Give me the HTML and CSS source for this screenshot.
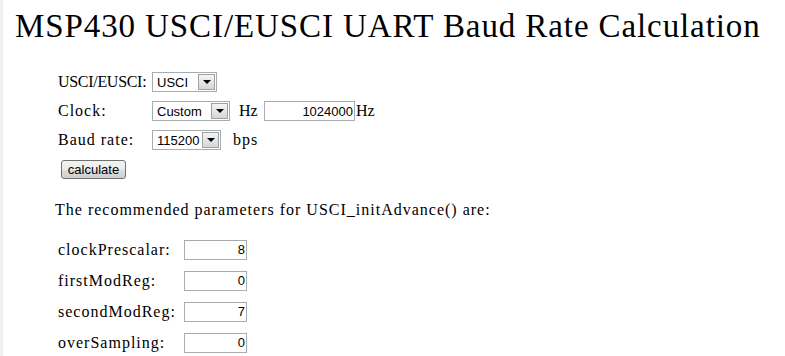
FILE: index.html
```html
<!doctype html>
<html lang="en">
  <head>
    <meta charset="UTF-8" />
    <title>MSP430 USCI/EUSCI UART Baud Rate Calculation</title>
    <link rel="stylesheet" href="styles.css">
  </head>
  <body>
    <h1>MSP430 USCI/EUSCI UART Baud Rate Calculation</h1>

    <div id="settings" class="grid">
      <label for="module" class="tight">USCI/EUSCI:</label>
      <div class="cell">
        <span class="select" style="width: 65px">
          <select id="module">
            <option>USCI</option>
            <option>EUSCI</option>
          </select>
        </span>
      </div>

      <label for="clock">Clock:</label>
      <div class="cell">
        <span class="select" style="width: 78px">
          <select id="clock">
            <option>Custom</option>
          </select>
        </span>
        <span class="unit">Hz</span>
        <span class="joined"><input id="freq" class="num" type="text" value="1024000" style="width: 91px" /><span class="unit">Hz</span></span>
      </div>

      <label for="baud">Baud rate:</label>
      <div class="cell wide">
        <span class="select" style="width: 69px">
          <select id="baud">
            <option>115200</option>
            <option>9600</option>
          </select>
        </span>
        <span>bps</span>
      </div>

      <div class="full">
        <button id="calculate">calculate</button>
      </div>
    </div>

    <p id="summary">The recommended parameters for USCI_initAdvance() are:</p>

    <div id="results" class="grid">
      <label>clockPrescalar:</label>
      <input class="num result" type="text" value="8" />
      <label>firstModReg:</label>
      <input class="num result" type="text" value="0" />
      <label>secondModReg:</label>
      <input class="num result" type="text" value="7" />
      <label>overSampling:</label>
      <input class="num result" type="text" value="0" />
    </div>
  </body>
</html>
```

FILE: styles.css
```css
* {
  box-sizing: border-box;
  margin: 0;
  padding: 0;
}

html,
body {
  background: #fff;
}

body {
  min-height: 100vh;
  border-left: 3px solid #f0f0f0;
  padding-left: 4px;
  font-family: 'Liberation Serif', 'Times New Roman', serif;
  font-size: 16px;
  letter-spacing: 1px;
  color: #000;
}

h1 {
  margin: 8px 0 0 8px;
  font-size: 33px;
  line-height: 36px;
  font-weight: normal;
  letter-spacing: 0.9px;
  white-space: nowrap;
}

.grid {
  display: grid;
  align-items: center;
}

#settings {
  margin: 28px 0 0 51px;
  grid-template-columns: 94px auto;
  grid-auto-rows: 20px;
  row-gap: 9px;
}

.tight {
  letter-spacing: -0.3px;
  white-space: nowrap;
}

.cell {
  display: flex;
  align-items: center;
  gap: 9px;
}

.cell.wide {
  gap: 12px;
}

.unit {
  width: 16px;
  letter-spacing: 0;
  white-space: nowrap;
}

.joined {
  display: flex;
  align-items: center;
}

.joined .unit {
  margin-left: 1px;
}

.full {
  grid-column: 1 / -1;
  padding-left: 3px;
}

/* dropdowns, drawn in the old windows look */
.select {
  position: relative;
  display: inline-block;
  height: 20px;
}

.select select {
  appearance: none;
  -webkit-appearance: none;
  width: 100%;
  height: 100%;
  border: 1px solid #a5acb2;
  background: #fff;
  padding: 0 20px 0 4px;
  font-family: 'Liberation Sans', Arial, sans-serif;
  font-size: 13px;
  color: #000;
  letter-spacing: 0;
}

.select::after {
  content: "";
  position: absolute;
  top: 2px;
  right: 2px;
  bottom: 2px;
  width: 15px;
  border: 1px solid #a0a0a0;
  background: linear-gradient(#f4f4f4, #d6d6d6);
  pointer-events: none;
}

.select::before {
  content: "";
  position: absolute;
  top: 8px;
  right: 6px;
  border-left: 4px solid transparent;
  border-right: 4px solid transparent;
  border-top: 4px solid #000;
  z-index: 1;
  pointer-events: none;
}

input.num {
  height: 20px;
  border: 1px solid #abadb3;
  border-top-color: #a9a9a9;
  padding: 0 1px;
  text-align: right;
  font-family: 'Liberation Sans', Arial, sans-serif;
  font-size: 13px;
  color: #000;
  letter-spacing: 0;
}

#calculate {
  width: 65px;
  height: 19px;
  border: 1px solid #707070;
  border-radius: 3px;
  background: linear-gradient(#f2f2f2 0%, #ebebeb 50%, #dddddd 51%, #cfcfcf 100%);
  font-family: 'Liberation Sans', Arial, sans-serif;
  font-size: 13px;
  letter-spacing: 0;
  color: #000;
  line-height: 17px;
}

#summary {
  margin: 21px 0 0 48px;
  line-height: 20px;
}

#results {
  margin: 19px 0 0 51px;
  grid-template-columns: 126px 63px;
  grid-auto-rows: 21px;
  row-gap: 10px;
}

.result {
  width: 63px;
  height: 21px;
}
```
